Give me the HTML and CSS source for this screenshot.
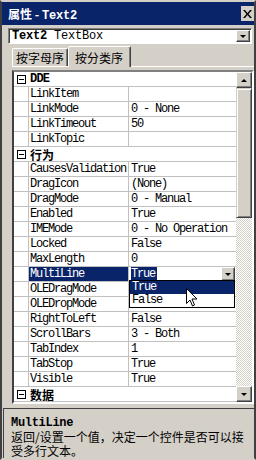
FILE: index.html
```html
<!DOCTYPE html>
<html>
<head>
  <title>属性 - Text2</title>
  <link rel="stylesheet" href="styles.css">
</head>
<body>
  <div class="window">
    <div class="titlebar">
      <span class="title">属性 - <span class="mono">Text2</span></span>
      <span class="close">
        <svg width="9" height="8" viewBox="0 0 9 8"><path d="M0 0h2l2.5 3L7 0h2L5.5 4 9 8H7L4.5 5 2 8H0l3.5-4z" fill="#000"/></svg>
      </span>
    </div>

    <div class="combo">
      <span class="combo-text"><b>Text2</b> TextBox</span>
      <span class="btn combo-btn"><span class="arrow-down"></span></span>
    </div>

    <div class="tabs">
      <div class="tab">按字母序</div>
      <div class="tab active">按分类序</div>
    </div>

    <div class="panel">
      <div class="grid">
        <div class="rows">
          <div class="row cat"><span class="gut"><span class="toggle"></span></span><span class="cat-name mono">DDE</span></div>
          <div class="row"><span class="gut"></span><span class="name">LinkItem</span><span class="val"></span></div>
          <div class="row"><span class="gut"></span><span class="name">LinkMode</span><span class="val">0 - None</span></div>
          <div class="row"><span class="gut"></span><span class="name">LinkTimeout</span><span class="val">50</span></div>
          <div class="row"><span class="gut"></span><span class="name">LinkTopic</span><span class="val"></span></div>
          <div class="row cat"><span class="gut"><span class="toggle"></span></span><span class="cat-name">行为</span></div>
          <div class="row"><span class="gut"></span><span class="name">CausesValidation</span><span class="val">True</span></div>
          <div class="row"><span class="gut"></span><span class="name">DragIcon</span><span class="val">(None)</span></div>
          <div class="row"><span class="gut"></span><span class="name">DragMode</span><span class="val">0 - Manual</span></div>
          <div class="row"><span class="gut"></span><span class="name">Enabled</span><span class="val">True</span></div>
          <div class="row"><span class="gut"></span><span class="name">IMEMode</span><span class="val">0 - No Operation</span></div>
          <div class="row"><span class="gut"></span><span class="name">Locked</span><span class="val">False</span></div>
          <div class="row"><span class="gut"></span><span class="name">MaxLength</span><span class="val">0</span></div>
          <div class="row selected"><span class="gut"></span><span class="name">MultiLine</span><span class="val"><span class="sel-text">True</span><span class="btn val-btn"><span class="arrow-down"></span></span></span></div>
          <div class="row"><span class="gut"></span><span class="name">OLEDragMode</span><span class="val"></span></div>
          <div class="row"><span class="gut"></span><span class="name">OLEDropMode</span><span class="val"></span></div>
          <div class="row"><span class="gut"></span><span class="name">RightToLeft</span><span class="val">False</span></div>
          <div class="row"><span class="gut"></span><span class="name">ScrollBars</span><span class="val">3 - Both</span></div>
          <div class="row"><span class="gut"></span><span class="name">TabIndex</span><span class="val">1</span></div>
          <div class="row"><span class="gut"></span><span class="name">TabStop</span><span class="val">True</span></div>
          <div class="row"><span class="gut"></span><span class="name">Visible</span><span class="val">True</span></div>
          <div class="row cat"><span class="gut"><span class="toggle"></span></span><span class="cat-name">数据</span></div>

          <div class="droplist">
            <div class="item active">True</div>
            <div class="item">False</div>
          </div>
          <svg class="cursor" width="12" height="19" viewBox="0 0 12 19">
            <path d="M0.5 0.5v15l3.5-3.5 2.5 6 2-1-2.5-6h5z" fill="#fff" stroke="#000"/>
          </svg>
        </div>

        <div class="scrollbar">
          <span class="btn sb-btn"><span class="arrow-up"></span></span>
          <span class="thumb"></span>
          <span class="track"></span>
          <span class="btn sb-btn"><span class="arrow-down"></span></span>
        </div>
      </div>
    </div>

    <div class="desc">
      <div class="desc-title">MultiLine</div>
      <div class="desc-text">返回/设置一个值，决定一个控件是否可以接受多行文本。</div>
    </div>
  </div>
</body>
</html>
```

FILE: styles.css
```css
body {
  margin: 0;
  padding: 0;
  background-color: #d4d0c8;
  font-family: "Liberation Mono", "Noto Sans CJK SC", monospace;
  font-size: 12px;
  color: #000;
}

.mono {
  font-family: "Liberation Mono", monospace;
}

.window {
  width: 256px;
  height: 460px;
  box-sizing: border-box;
  border: 2px solid;
  border-color: #d4d0c8 #404040 #d4d0c8 #404040;
  background-color: #d4d0c8;
  display: flex;
  flex-direction: column;
  overflow: hidden;
}

.titlebar {
  height: 23px;
  flex-shrink: 0;
  background-color: #0a246a;
  color: #fff;
  font-weight: bold;
  display: flex;
  align-items: center;
  justify-content: space-between;
  padding-left: 6px;
}

.title {
  font-family: "Noto Sans CJK SC", sans-serif;
  font-size: 12px;
}

.title .mono {
  letter-spacing: -0.2px;
}

.close {
  width: 13px;
  height: 15px;
  background-color: #d4d0c8;
  display: flex;
  align-items: center;
  justify-content: center;
}

.btn {
  box-sizing: border-box;
  background-color: #d4d0c8;
  border: 1px solid;
  border-color: #ffffff #404040 #404040 #ffffff;
  box-shadow: inset -1px -1px 0 #808080;
  display: flex;
  align-items: center;
  justify-content: center;
}

.arrow-down {
  width: 0;
  height: 0;
  border-left: 3px solid transparent;
  border-right: 3px solid transparent;
  border-top: 3px solid #000;
}

.arrow-up {
  width: 0;
  height: 0;
  border-left: 3px solid transparent;
  border-right: 3px solid transparent;
  border-bottom: 3px solid #000;
}

.combo {
  margin: 3px 2px 0 6px;
  height: 16px;
  flex-shrink: 0;
  box-sizing: border-box;
  border: 1px solid;
  border-color: #808080 #ffffff #ffffff #808080;
  box-shadow: inset 1px 1px 0 #404040;
  background-color: #fff;
  display: flex;
  align-items: center;
  justify-content: space-between;
}

.combo-text {
  padding-left: 3px;
  letter-spacing: -0.2px;
}

.combo-btn {
  width: 14px;
  height: 12px;
  margin-right: 1px;
}

.tabs {
  display: flex;
  align-items: flex-end;
  height: 22px;
  flex-shrink: 0;
  margin-left: 10px;
  border-bottom: 1px solid #fff;
}

.tab {
  font-family: "Noto Sans CJK SC", sans-serif;
  height: 17px;
  padding: 0 3px;
  border: 1px solid;
  border-bottom: none;
  border-color: #ffffff #404040 transparent #ffffff;
  box-shadow: inset -1px 0 0 #808080;
  display: flex;
  align-items: center;
  border-radius: 2px 2px 0 0;
}

.tab.active {
  height: 20px;
  padding: 0 7px 0 6px;
  margin-bottom: -1px;
  background-color: #d4d0c8;
}

.panel {
  flex-shrink: 0;
  padding-top: 3px;
}

.grid {
  margin-left: 10px;
  height: 334px;
  box-sizing: border-box;
  border: 2px solid;
  border-color: #808080 #ffffff #ffffff #404040;
  background-color: #fff;
  display: flex;
}

.rows {
  position: relative;
  flex: 1;
  overflow: hidden;
}

.row {
  height: 15px;
  box-sizing: border-box;
  border-bottom: 1px solid #c0c0c0;
  display: flex;
  align-items: center;
  letter-spacing: -1.2px;
  white-space: nowrap;
}

.gut {
  width: 14px;
  height: 100%;
  flex-shrink: 0;
  display: flex;
  align-items: center;
  justify-content: center;
  background-color: #fff;
}

.toggle {
  width: 7px;
  height: 7px;
  border: 1px solid #000;
  position: relative;
  background-color: #fff;
}

.toggle::after {
  content: "";
  position: absolute;
  left: 1px;
  top: 3px;
  width: 5px;
  height: 1px;
  background-color: #000;
}

.cat-name {
  font-family: "Noto Sans CJK SC", sans-serif;
  font-weight: bold;
  padding-left: 2px;
  letter-spacing: 0;
}

.cat-name.mono {
  font-family: "Liberation Mono", monospace;
  letter-spacing: -0.8px;
}

.name {
  width: 101px;
  height: 100%;
  flex-shrink: 0;
  box-sizing: border-box;
  border-left: 1px solid #c0c0c0;
  border-right: 1px solid #c0c0c0;
  padding-left: 1px;
  display: flex;
  align-items: center;
  overflow: hidden;
}

.val {
  flex: 1;
  height: 100%;
  padding-left: 2px;
  display: flex;
  align-items: center;
  justify-content: space-between;
  overflow: hidden;
}

.selected .name {
  background-color: #0a246a;
  color: #fff;
}

.sel-text {
  background-color: #0a246a;
  color: #fff;
  padding-right: 2px;
}

.val-btn {
  width: 14px;
  height: 14px;
  margin-right: 1px;
}

.droplist {
  position: absolute;
  left: 115px;
  top: 208px;
  width: 106px;
  box-sizing: border-box;
  border: 1px solid #000;
  background-color: #fff;
  letter-spacing: -1.2px;
}

.item {
  height: 13px;
  line-height: 13px;
  padding-left: 2px;
}

.item.active {
  background-color: #0a246a;
  color: #fff;
}

.cursor {
  position: absolute;
  left: 172px;
  top: 216px;
}

.scrollbar {
  width: 16px;
  display: flex;
  flex-direction: column;
}

.sb-btn {
  width: 16px;
  height: 16px;
}

.thumb {
  height: 130px;
  box-sizing: border-box;
  background-color: #d4d0c8;
  border: 1px solid;
  border-color: #d4d0c8 #404040 #404040 #d4d0c8;
  box-shadow: inset 1px 1px 0 #fff, inset -1px -1px 0 #808080;
}

.track {
  flex: 1;
  background-image: repeating-conic-gradient(#ffffff 0 25%, #d4d0c8 0 50%);
  background-size: 2px 2px;
}

.desc {
  margin: 4px 0 0 1px;
  padding: 8px 3px 0 7px;
  flex: 1;
  min-height: 0;
  border-top: 1px solid #404040;
  border-left: 1px solid #404040;
  font-family: "Noto Sans CJK SC", sans-serif;
}

.desc-title {
  font-family: "Liberation Mono", monospace;
  font-weight: bold;
  letter-spacing: -0.3px;
  height: 13px;
  line-height: 13px;
}

.desc-text {
  font-size: 12px;
  line-height: 14px;
}
```
